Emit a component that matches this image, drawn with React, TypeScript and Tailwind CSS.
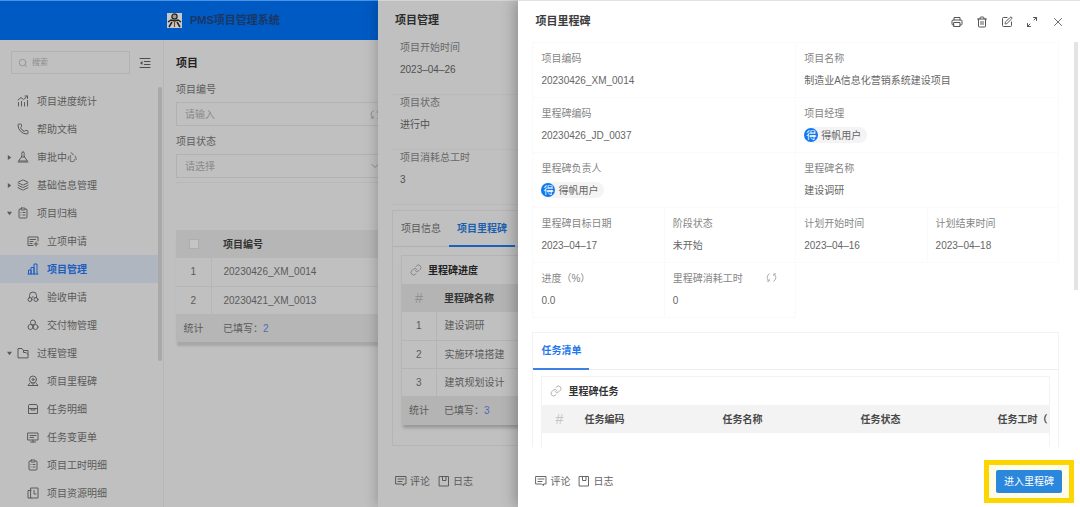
import type { ReactNode } from 'react'
import { ClipboardList, Layers, Link, Phone, Search, SquarePen, Trash2, X, ChevronDown } from 'lucide-react'

const Icon = ({ children, className = 'size-3' }: { children: ReactNode; className?: string }) => (
  <svg
    viewBox="0 0 24 24"
    fill="none"
    stroke="currentColor"
    strokeWidth="2"
    strokeLinecap="round"
    strokeLinejoin="round"
    className={`shrink-0 ${className}`}
  >
    {children}
  </svg>
)

const CollapseIcon = () => (
  <Icon>
    <path d="M2 3h20M11 9h11M11 15h11M2 21h20" />
    <path d="M7 8v8l-5-4z" fill="currentColor" stroke="none" />
  </Icon>
)

const TrendIcon = () => (
  <Icon>
    <path d="M3 22v-7M9 22v-9M15 22v-7M21 22V11" />
    <path d="M2 10l6-5 5 4 8-7M16 2h5v5" />
  </Icon>
)

const ApproveIcon = () => (
  <Icon>
    <path d="M12 2a3 3 0 0 1 2 5l1 5H9l1-5a3 3 0 0 1 2-5z" />
    <path d="M9 12l-6 8h18l-6-8M2 22h20" />
  </Icon>
)

const FormIcon = () => (
  <Icon>
    <path d="M22 12V4H2v17h10M6 9h11M6 13h6M6 17h4" />
    <path d="M18 14v8M14 18h8" />
  </Icon>
)

const BuildingIcon = () => (
  <Icon>
    <path d="M2 22h20M3 22v-8h5v8M8 22V9h6v13M14 22V2h6v20" />
  </Icon>
)

const AcceptIcon = () => (
  <Icon>
    <path d="M5 14V9a7 7 0 0 1 14 0v5" />
    <circle cx="6" cy="17" r="4" />
    <circle cx="18" cy="17" r="4" />
    <path d="M9 14l3-3 3 3" />
  </Icon>
)

const DeliverIcon = () => (
  <Icon>
    <circle cx="12" cy="7" r="5" />
    <circle cx="7" cy="16" r="5" />
    <circle cx="17" cy="16" r="5" />
  </Icon>
)

const FolderIcon = () => (
  <Icon>
    <path d="M2 21V3h8l3 4h9v14zM13 7v4h5l4 4" />
  </Icon>
)

const MilestoneIcon = () => (
  <Icon>
    <circle cx="12" cy="9" r="7" />
    <circle cx="12" cy="9" r="2" />
    <path d="M5 17l-3 4h20l-3-4M9 16l3 3 3-3" />
  </Icon>
)

const DetailIcon = () => (
  <Icon>
    <path d="M5 3h14l2 3v15H3V6zM3 11h18M8 11v3h8v-3" />
  </Icon>
)

const MonitorIcon = () => (
  <Icon>
    <path d="M2 4h20v14H2zM6 9h12M6 13h7M12 18v4M7 22h10" />
  </Icon>
)

const ResourceIcon = () => (
  <Icon>
    <path d="M8 2h14v20H8zM8 7H2v15h6M14 7v7h4" />
  </Icon>
)

const PrintIcon = () => (
  <Icon>
    <path d="M6 8V3h12v5M6 18H4a2 2 0 0 1-2-2v-6a2 2 0 0 1 2-2h16a2 2 0 0 1 2 2v6a2 2 0 0 1-2 2h-2" />
    <path d="M6 13h12v8H6z" />
  </Icon>
)

const ExpandIcon = () => (
  <Icon>
    <path d="M15 3h6v6M21 3l-5 5M9 21H3v-6M3 21l5-5" />
  </Icon>
)

const SyncIcon = () => (
  <svg viewBox="0 0 24 24" fill="none" stroke="currentColor" strokeWidth="2" className="size-[11px] shrink-0">
    <path d="M8 3.500A9.500 9.500 0 0 0 6 19.500M16 20.500A9.500 9.500 0 0 0 18 4.500" />
    <path d="M2 20h5v-5M22 4h-5v5" />
  </svg>
)

const CommentIcon = () => (
  <Icon>
    <path d="M2 3h20v15h-5v3l-4-3H2zM6 8h12M6 13h8" />
  </Icon>
)

const LogIcon = () => (
  <Icon>
    <path d="M3 3h18v19H3zM9 3v8h7V3" />
  </Icon>
)

type MenuItem = {
  label: string
  icon: ReactNode
  child?: boolean
  active?: boolean
  arrow?: 'open' | 'closed'
}

const menu: MenuItem[] = [
  { label: '项目进度统计', icon: <TrendIcon /> },
  { label: '帮助文档', icon: <Phone className="size-3 shrink-0" /> },
  { label: '审批中心', icon: <ApproveIcon />, arrow: 'closed' },
  { label: '基础信息管理', icon: <Layers className="size-3 shrink-0" />, arrow: 'closed' },
  { label: '项目归档', icon: <ClipboardList className="size-3 shrink-0" />, arrow: 'open' },
  { label: '立项申请', icon: <FormIcon />, child: true },
  { label: '项目管理', icon: <BuildingIcon />, child: true, active: true },
  { label: '验收申请', icon: <AcceptIcon />, child: true },
  { label: '交付物管理', icon: <DeliverIcon />, child: true },
  { label: '过程管理', icon: <FolderIcon />, arrow: 'open' },
  { label: '项目里程碑', icon: <MilestoneIcon />, child: true },
  { label: '任务明细', icon: <DetailIcon />, child: true },
  { label: '任务变更单', icon: <MonitorIcon />, child: true },
  { label: '项目工时明细', icon: <ClipboardList className="size-3 shrink-0" />, child: true },
  { label: '项目资源明细', icon: <ResourceIcon />, child: true },
]

function Sidebar() {
  return (
    <aside className="w-[164px] shrink-0 border-r border-[#b8b8b8] pt-[11px]">
      <div className="flex items-center justify-between pr-3 pl-[11px]">
        <label className="flex h-[23px] w-[119px] items-center gap-1 border border-[#b2b2b2] px-1.5 text-[#909090]">
          <Search className="size-2.5 shrink-0" />
          <input
            aria-label="搜索"
            placeholder="搜索"
            className="w-full min-w-0 bg-transparent text-[8px] outline-none placeholder:text-[#8c8c8c]"
          />
        </label>
        <button aria-label="收起菜单" className="text-[#4c4c4c]">
          <CollapseIcon />
        </button>
      </div>
      <div className="mt-[13px] flex items-start">
        <nav className="flex-1">
          {menu.map((item) => (
            <a
              key={item.label}
              href="#"
              className={`flex h-7 items-center ${item.child ? 'gap-2 pl-[27px]' : 'pl-[7px]'} ${
                item.active ? 'bg-[#b0b6bf] font-bold text-[#1c5fc0]' : 'text-[#5a5a5a]'
              }`}
            >
              {!item.child && (
                <span className="flex w-2.5 shrink-0 items-center">
                  {item.arrow && (
                    <svg viewBox="0 0 6 6" className="size-[5px]" fill="currentColor">
                      <path d={item.arrow === 'open' ? 'M0 1h6L3 5z' : 'M1 0v6l4-3z'} />
                    </svg>
                  )}
                </span>
              )}
              {item.icon}
              <span className={item.child ? '' : 'ml-2'}>{item.label}</span>
            </a>
          ))}
        </nav>
        <div className="mr-px h-[274px] w-1 rounded-full bg-[#a9a9a9]" />
      </div>
    </aside>
  )
}

function ProjectList() {
  const rows = ['20230426_XM_0014', '20230421_XM_0013']
  return (
    <main className="min-w-0 flex-1 pl-3">
      <h1 className="pt-[15px] text-[11px] leading-4 font-bold text-[#222]">项目</h1>
      <form className="border-b border-[#b8b8b8] pb-1">
        <label className="block pt-[11px] text-[#5c5c5c]">
          <span className="block leading-4">项目编号</span>
          <span className="mt-1 flex h-6 w-[214px] items-center justify-between border border-[#b2b2b2] px-2 text-[#8a8a8a]">
            <input placeholder="请输入" className="w-full min-w-0 bg-transparent outline-none placeholder:text-[#8a8a8a]" />
            <SyncIcon />
          </span>
        </label>
        <div className="pt-2 text-[#5c5c5c]">
          <label htmlFor="status" className="block leading-4">
            项目状态
          </label>
          <div className="mt-1 flex h-6 w-[214px] items-center justify-between border border-[#b2b2b2] px-2">
            <select id="status" className="w-full appearance-none bg-transparent text-[#8a8a8a] outline-none">
              <option>请选择</option>
            </select>
            <ChevronDown strokeWidth={1.5} className="size-3 shrink-0 text-[#777]" />
          </div>
        </div>
      </form>
      <table className="mt-[47px] w-full table-fixed text-left text-[#5a5a5a] shadow-[0_5px_2px_-1px_#a8a8a8]">
        <thead>
          <tr className="h-7 bg-[#b6b6b6] text-[#333]">
            <th className="w-[35px] text-center">
              <input
                type="checkbox"
                aria-label="全选"
                className="mx-auto block size-2.5 appearance-none border border-[#adadad] bg-[#c4c4c4]"
              />
            </th>
            <th className="pl-3">项目编号</th>
          </tr>
        </thead>
        <tbody>
          {rows.map((code, i) => (
            <tr key={code} className="h-7 border-b border-[#b6b6b6] bg-[#c0c0c0]">
              <td className="border-r border-[#b6b6b6] text-center">{i + 1}</td>
              <td className="pl-3">{code}</td>
            </tr>
          ))}
        </tbody>
        <tfoot>
          <tr className="h-7 bg-[#b6b6b6]">
            <td className="text-center">统计</td>
            <td className="pl-3">
              已填写：<span className="text-[#5069b4]">2</span>
            </td>
          </tr>
        </tfoot>
      </table>
    </main>
  )
}

const FooterLinks = () => (
  <>
    <button className="flex items-center gap-[3px]">
      <CommentIcon />
      评论
    </button>
    <button className="flex items-center gap-[3px]">
      <LogIcon />
      日志
    </button>
  </>
)

const ProjectField = ({ label, value }: { label: string; value: string }) => (
  <div className="h-[55px] border-b border-[#bababa] pl-2">
    <dt className="leading-4 text-[#686868]">{label}</dt>
    <dd className="mt-1.5 leading-4 text-[#505050]">{value}</dd>
  </div>
)

function ProjectDrawer() {
  const stages = ['建设调研', '实施环境搭建', '建筑规划设计']
  return (
    <section className="absolute inset-y-0 right-0 flex w-[65%] flex-col border-t border-[#d5d5d5] bg-[#c0c0c0] text-[#5a5a5a] shadow-[-2px_0_12px_rgba(0,0,0,0.2)]">
      <h2 className="pt-[11px] pl-[17px] text-[11px] leading-4 font-bold text-[#2c2c2c]">项目管理</h2>
      <div className="min-h-0 flex-1 overflow-hidden px-3.5 pt-3">
        <dl>
          <ProjectField label="项目开始时间" value="2023–04–26" />
          <ProjectField label="项目状态" value="进行中" />
          <ProjectField label="项目消耗总工时" value="3" />
        </dl>
        <div className="mt-[5px] h-[236px] border border-[#b5b5b5]">
          <div role="tablist" className="flex h-9 border-b border-[#b0b0b0]">
            <button role="tab" className="px-2">
              项目信息
            </button>
            <button role="tab" aria-selected className="-mb-px border-b-2 border-[#1c61b8] px-2 font-bold text-[#1c5fae]">
              项目里程碑
            </button>
          </div>
          <div className="mx-2 mt-2 border border-[#b5b5b5] shadow-[0_5px_3px_-2px_#989898]">
            <h3 className="flex h-7 items-center gap-1.5 pl-2 font-bold text-[#222]">
              <Link strokeWidth={1.5} className="size-3 text-[#777]" />
              里程碑进度
            </h3>
            <table className="w-full table-fixed text-left">
              <thead>
                <tr className="h-7 bg-[#b4b4b4] text-[#333]">
                  <th className="w-[34px] text-center text-sm font-normal text-[#909090]">#</th>
                  <th className="pl-2">里程碑名称</th>
                </tr>
              </thead>
              <tbody>
                {stages.map((name, i) => (
                  <tr key={name} className="h-7 border-b border-[#b4b4b4]">
                    <td className="border-r border-[#b4b4b4] text-center">{i + 1}</td>
                    <td className="pl-2">{name}</td>
                  </tr>
                ))}
              </tbody>
              <tfoot>
                <tr className="h-7 bg-[#b4b4b4]">
                  <td className="text-center">统计</td>
                  <td className="pl-2">
                    已填写：<span className="text-[#5069b4]">3</span>
                  </td>
                </tr>
              </tfoot>
            </table>
          </div>
        </div>
      </div>
      <footer className="flex h-[60px] items-center gap-2 pt-2 pl-[17px]">
        <FooterLinks />
      </footer>
    </section>
  )
}

const UserTag = () => (
  <span className="inline-flex h-4 items-center gap-[3px] rounded-full bg-[#f4f4f4] pr-1.5">
    <span className="flex size-3.5 items-center justify-center rounded-full bg-[#1078f0] text-white">得</span>
    得帆用户
  </span>
)

const fields: { label: string; value: ReactNode; wide?: boolean; refresh?: boolean }[] = [
  { label: '项目编码', value: '20230426_XM_0014', wide: true },
  { label: '项目名称', value: '制造业A信息化营销系统建设项目', wide: true },
  { label: '里程碑编码', value: '20230426_JD_0037', wide: true },
  { label: '项目经理', value: <UserTag />, wide: true },
  { label: '里程碑负责人', value: <UserTag />, wide: true },
  { label: '里程碑名称', value: '建设调研', wide: true },
  { label: '里程碑目标日期', value: '2023–04–17' },
  { label: '阶段状态', value: '未开始' },
  { label: '计划开始时间', value: '2023–04–16' },
  { label: '计划结束时间', value: '2023–04–18' },
  { label: '进度（%）', value: '0.0' },
  { label: '里程碑消耗工时', value: '0', refresh: true },
]

function MilestoneDrawer() {
  return (
    <section className="absolute inset-y-0 right-0 flex w-[52%] flex-col border-t border-[#e2e2e2] bg-white text-[#666] shadow-[-2px_0_14px_rgba(0,0,0,0.3)]">
      <header className="flex h-[41px] shrink-0 items-center justify-between pr-[15px] pl-[17px]">
        <h2 className="text-[11px] font-bold text-[#3c3c3c]">项目里程碑</h2>
        <div className="flex gap-[13px] text-[#555]">
          <button aria-label="打印"><PrintIcon /></button>
          <button aria-label="删除"><Trash2 className="size-3" /></button>
          <button aria-label="编辑"><SquarePen className="size-3" /></button>
          <button aria-label="全屏"><ExpandIcon /></button>
          <button aria-label="关闭"><X strokeWidth={1.5} className="size-3.5" /></button>
        </div>
      </header>
      <div className="flex min-h-0 flex-1 items-start overflow-hidden">
        <div className="min-w-0 flex-1 pr-[15px] pl-3.5">
          <dl className="grid grid-cols-4 border-t border-l border-[#fafafa]">
            {fields.map((field) => (
              <div
                key={field.label}
                className={`flex justify-between border-r border-b border-[#fafafa] py-2 pl-2 ${field.wide ? 'col-span-2' : ''}`}
              >
                <div>
                  <dt className="leading-4 text-[#868686]">{field.label}</dt>
                  <dd className="mt-1 flex h-[18px] items-center">{field.value}</dd>
                </div>
                {field.refresh && (
                  <button aria-label="刷新" className="mr-[18px] h-3 self-start text-[#aaa]">
                    <SyncIcon />
                  </button>
                )}
              </div>
            ))}
          </dl>
          <div className="mt-3.5 h-[200px] border border-[#f2f2f2]">
            <div role="tablist" className="flex h-[37px] border-b border-[#eee]">
              <button role="tab" aria-selected className="-mb-px border-b-2 border-[#3b82e6] px-2 font-bold text-[#1f78ee]">
                任务清单
              </button>
            </div>
            <div className="mx-2 mt-1.5 overflow-hidden border border-[#f2f2f2]">
              <h3 className="flex h-7 items-center gap-1.5 pl-2 font-bold text-[#333]">
                <Link strokeWidth={1.5} className="size-3 text-[#999]" />
                里程碑任务
              </h3>
              <table className="w-full table-fixed text-left">
                <thead>
                  <tr className="h-7 bg-[#f3f3f3] text-[#484848]">
                    <th className="w-[34px] text-center text-sm font-normal text-[#c4c4c4]">#</th>
                    <th className="w-[138px] pl-2">任务编码</th>
                    <th className="w-[138px] pl-2">任务名称</th>
                    <th className="w-[137px] pl-2">任务状态</th>
                    <th className="pl-2 whitespace-nowrap">任务工时（</th>
                  </tr>
                </thead>
                <tbody>
                  <tr className="h-16">
                    <td colSpan={5} />
                  </tr>
                </tbody>
              </table>
            </div>
          </div>
        </div>
        <div className="mr-0.5 h-[248px] w-1 bg-[#e4e4e4]" />
      </div>
      <footer className="flex h-[60px] shrink-0 items-center gap-2 pt-2 pr-1.5 pl-[17px]">
        <FooterLinks />
        <div className="ml-auto border-5 border-[#fdd500] bg-[#fffde8] px-[7px] py-[5px]">
          <button className="flex h-[23px] items-center rounded-xs bg-[#2b87dc] px-2 text-white">进入里程碑</button>
        </div>
      </footer>
    </section>
  )
}

export default function App() {
  return (
    <div className="relative flex h-screen flex-col overflow-hidden bg-[#c0c0c0] font-['Liberation_Sans','Noto_Sans_CJK_SC',sans-serif] text-[10px]">
      <header className="flex h-10 shrink-0 items-center gap-2 border-t border-[#4b94e8] bg-[#005ac4] pl-[167px]">
        <svg viewBox="0 0 15 15" className="size-[15px]" fill="none">
          <path d="M0 0h15v15H0z" fill="#c8c8c8" />
          <circle cx="7.500" cy="3.500" r="2.600" fill="#a39788" stroke="#222" strokeWidth="1.200" />
          <path d="M1 9l3-2 3.500 1L11 7l3 2M5 9l-3 5M10 9l3 5" stroke="#222" strokeWidth="1.500" />
          <path d="M7.500 8v6" stroke="#7a4a22" strokeWidth="1.200" />
        </svg>
        <span className="text-[11px] font-bold text-[#1b3763]">PMS项目管理系统</span>
      </header>
      <div className="flex min-h-0 flex-1">
        <Sidebar />
        <ProjectList />
      </div>
      <ProjectDrawer />
      <MilestoneDrawer />
    </div>
  )
}
